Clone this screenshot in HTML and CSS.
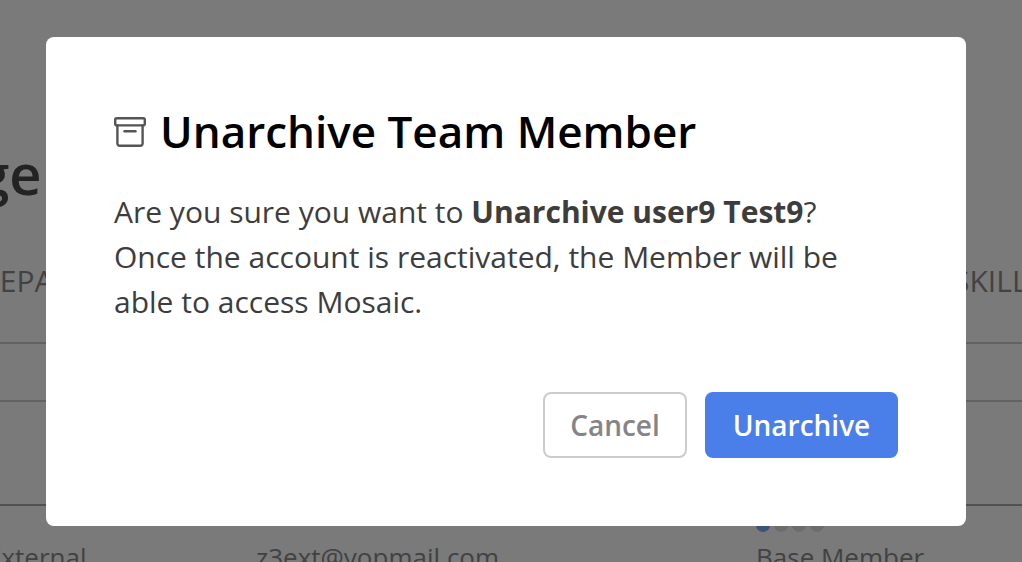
FILE: index.html
```html
<!DOCTYPE html>
<html lang="en">
<head>
<meta charset="utf-8">
<title>Unarchive Team Member</title>
<link rel="stylesheet" href="styles.css">
</head>
<body>
<main class="page">
  <h1 class="page-title">Manage</h1>
  <div class="head-row">
    <span class="col-a">DEPARTMENT</span>
    <span class="col-b">SKILLS</span>
  </div>
  <div class="rule rule-1"></div>
  <div class="rule rule-2"></div>
  <div class="rule rule-3"></div>
  <div class="dots"><i class="dot on"></i><i class="dot"></i><i class="dot"></i><i class="dot"></i></div>
  <div class="data-row">
    <span class="cell-a">External</span>
    <span class="cell-b">z3ext@yopmail.com</span>
    <span class="cell-c">Base Member</span>
  </div>
</main>
<div class="overlay">
  <section class="modal" role="dialog" aria-labelledby="modal-title">
    <h2 class="modal-title" id="modal-title">
      <svg class="title-icon" viewBox="0 0 32 30" aria-hidden="true">
        <rect x="1.2" y="1.2" width="29.6" height="7.2" rx="1.6"/>
        <path d="M3.4 8.4V26.6a2.2 2.2 0 0 0 2.2 2.2H26.4a2.2 2.2 0 0 0 2.2-2.2V8.4"/>
        <path d="M10.5 14.2H21.5"/>
      </svg>
      <span>Unarchive Team Member</span>
    </h2>
    <p class="modal-text">Are you sure you want to <strong>Unarchive user9 Test9</strong>?<br>Once the account is reactivated, the Member will be<br>able to access Mosaic.</p>
    <div class="actions">
      <button class="btn btn-cancel" type="button">Cancel</button>
      <button class="btn btn-primary" type="button">Unarchive</button>
    </div>
  </section>
</div>
</body>
</html>
```
FILE: styles.css
```css
* { box-sizing: border-box; }
html, body { margin: 0; height: 100%; overflow: hidden; }
body { font-family: "Open Sans", "Noto Sans", sans-serif; background: #fff; color: #333; }

.page { height: 562px; overflow: hidden; padding-top: 135px; }
.page-title { margin: 0 0 0 -174px; font-size: 56px; line-height: 76px; font-weight: 600; color: #4a4a4a; white-space: nowrap; }
.head-row { margin-top: 50px; display: flex; justify-content: space-between; font-size: 30px; line-height: 40px; color: #8a8a8a; white-space: nowrap; }
.col-a { margin-left: -22px; }
.col-b { margin-right: -22px; }
.rule { height: 2px; background: #ccc; }
.rule-1 { margin-top: 41px; }
.rule-2 { margin-top: 56px; }
.rule-3 { margin-top: 102px; background: #aaa; }
.dots { display: flex; gap: 4px; margin: 12px 0 0 756px; height: 14px; }
.dot { width: 14px; height: 14px; border-radius: 50%; background: #e4e4e4; }
.dot.on { background: #7eb0ff; }
.data-row { display: flex; margin-top: 7px; font-size: 26px; line-height: 36px; color: #8a8a8a; white-space: nowrap; }
.cell-a { width: 256px; margin-left: -13px; flex: none; }
.cell-b { width: 500px; flex: none; margin-left: 13px; }
.cell-c { flex: none; }

.overlay { position: fixed; inset: 0; background: rgba(0, 0, 0, 0.52); }
.modal { position: absolute; left: 46px; top: 37px; width: 920px; height: 489px; background: #fff; border-radius: 8px; padding: 62px 68px 68px; }
.modal-title { display: flex; align-items: center; gap: 15px; margin: 0; font-size: 44px; line-height: 64px; font-weight: 600; color: #000; white-space: nowrap; }
.title-icon { width: 32px; height: 30px; flex: none; margin-top: 1px; margin-right: -1px; fill: none; stroke: #555; stroke-width: 2.4; stroke-linecap: round; stroke-linejoin: round; }
.modal-text { margin: 26px 0 0; font-size: 30px; line-height: 45px; color: #3d3d3d; }
.modal-text strong { font-weight: 700; }
.actions { display: flex; justify-content: flex-end; gap: 18px; margin-top: 68px; }
.btn { height: 66px; border-radius: 8px; font: 600 28px/1 "Open Sans", "Noto Sans", sans-serif; }
.btn-cancel { width: 144px; background: #fff; border: 2px solid #ccc; color: #858585; }
.btn-primary { width: 193px; background: #4a7ee8; border: 0; color: #fff; }
```
